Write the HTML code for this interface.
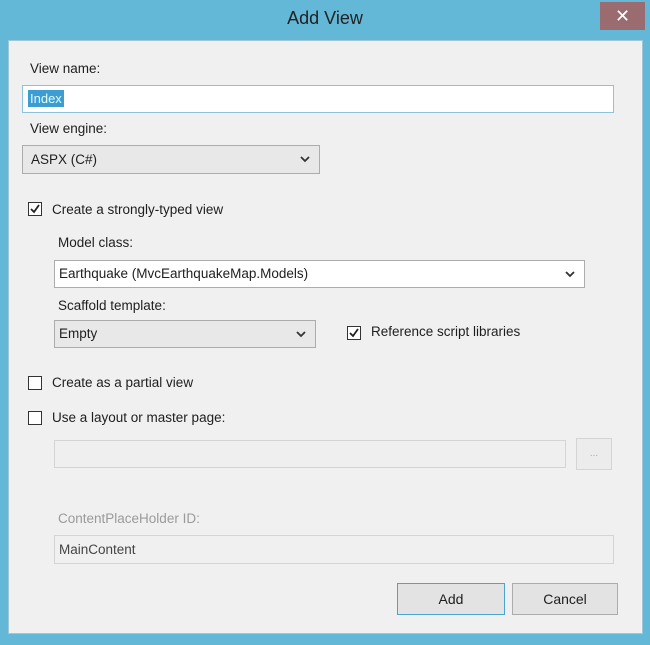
<!DOCTYPE html>
<html><head><style>
body{margin:0;width:650px;height:645px;background:#63b7d7;position:relative;overflow:hidden;font-family:"Liberation Sans",sans-serif;font-size:13.5px;color:#1e1e1e}
.a{position:absolute}
.panel{left:8px;top:40px;width:633px;height:592px;background:#f0f0f0;border:1px solid #9fc7d8}
.t{position:absolute;white-space:nowrap}
.box{position:absolute;box-sizing:border-box;border:1px solid #acacac;background:#e8e8e8}
.cb{position:absolute;width:14px;height:14px;border:1px solid #333;background:#fff;box-sizing:border-box}
.arr{position:absolute;right:8px;top:7px}
.btn{position:absolute;box-sizing:border-box;border:1px solid #acacac;background:#e3e3e3;text-align:center;line-height:30px;font-size:14px}
</style></head><body>
<div class="t" style="left:0;width:650px;top:8px;text-align:center;font-size:18px;color:#222">Add View</div>
<div class="a" style="left:600px;top:2px;width:45px;height:28px;background:#9a6c6f;color:#fff;text-align:center;line-height:28px;font-size:18px">✕</div>
<div class="a panel"></div>
<div class="t" style="left:30px;top:61px">View name:</div>
<div class="box" style="left:22px;top:85px;width:592px;height:28px;background:#fff;border-color:#8cc2dc"><span style="position:absolute;left:5px;top:4px;background:#3d9dd3;color:#dff;padding:0 2px;font-size:13px;line-height:17px">Index</span></div>
<div class="t" style="left:30px;top:121px">View engine:</div>
<div class="box" style="left:22px;top:145px;width:298px;height:29px"><span class="t" style="left:8px;top:6px">ASPX (C#)</span><svg class="arr" width="12" height="12"><path d="M2 4l4 4 4-4" stroke="#333" stroke-width="1.8" fill="none"/></svg></div>
<div class="cb" style="left:28px;top:202px"><svg width="12" height="12"><path d="M2 6l3 3 5-7" stroke="#222" stroke-width="1.8" fill="none"/></svg></div>
<div class="t" style="left:52px;top:202px">Create a strongly-typed view</div>
<div class="t" style="left:58px;top:235px">Model class:</div>
<div class="box" style="left:54px;top:260px;width:531px;height:28px;background:#fff"><span class="t" style="left:4px;top:5px">Earthquake (MvcEarthquakeMap.Models)</span><svg class="arr" width="12" height="12"><path d="M2 4l4 4 4-4" stroke="#333" stroke-width="1.8" fill="none"/></svg></div>
<div class="t" style="left:58px;top:298px">Scaffold template:</div>
<div class="box" style="left:54px;top:320px;width:262px;height:28px"><span class="t" style="left:4px;top:5px">Empty</span><svg class="arr" width="12" height="12"><path d="M2 4l4 4 4-4" stroke="#333" stroke-width="1.8" fill="none"/></svg></div>
<div class="cb" style="left:347px;top:326px"><svg width="12" height="12"><path d="M2 6l3 3 5-7" stroke="#222" stroke-width="1.8" fill="none"/></svg></div>
<div class="t" style="left:371px;top:324px">Reference script libraries</div>
<div class="cb" style="left:28px;top:376px"></div>
<div class="t" style="left:52px;top:375px">Create as a partial view</div>
<div class="cb" style="left:28px;top:411px"></div>
<div class="t" style="left:52px;top:410px">Use a layout or master page:</div>
<div class="box" style="left:54px;top:440px;width:512px;height:28px;border-color:#d4d4d4;background:#efefef"></div>
<div class="box" style="left:576px;top:438px;width:36px;height:32px;border-color:#d4d4d4;background:#ececec;color:#aaa;text-align:center;font-size:10px;line-height:30px">...</div>
<div class="t" style="left:58px;top:511px;color:#9a9a9a">ContentPlaceHolder ID:</div>
<div class="box" style="left:54px;top:535px;width:560px;height:29px;border-color:#d4d4d4;background:#f0f0f0"><span class="t" style="left:4px;top:6px;color:#444">MainContent</span></div>
<div class="btn" style="left:397px;top:583px;width:108px;height:32px;border-color:#4aa3d0">Add</div>
<div class="btn" style="left:512px;top:583px;width:106px;height:32px">Cancel</div>
</body></html>
